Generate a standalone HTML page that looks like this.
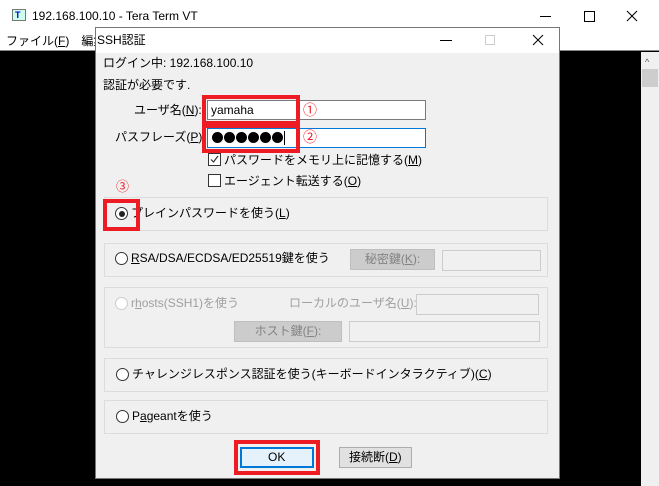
<!DOCTYPE html><html><head><meta charset="utf-8"><style>
*{margin:0;padding:0;box-sizing:border-box}
body{width:659px;height:486px;position:relative;overflow:hidden;background:#000;font-family:"Liberation Sans","Noto Sans CJK JP",sans-serif;font-size:12px;color:#000}
.a{position:absolute;white-space:nowrap;line-height:14px}
.box{position:absolute}
.grp{position:absolute;left:104px;width:444px;border:1px solid #dcdcdc}
.radio{position:absolute;width:13px;height:13px;border:1px solid #333;border-radius:50%;background:#fff}
.btn{position:absolute;background:#ccc;border:1px solid #bfbfbf;text-align:center;line-height:18px;color:#838383}
.tb{position:absolute;background:#f0f0f0;border:1px solid #ccc}
.red{position:absolute;border:4px solid #ed1c24}
.rn{position:absolute;color:#ed1c24;font-size:14px;line-height:14px}
.dis{color:#a0a0a0}
.dot{position:absolute;top:132px;width:11px;height:11px;border-radius:50%;background:#000}
u{text-decoration:underline}
</style></head><body>
<div class="box" style="left:0;top:0;width:659px;height:51px;background:#fff;border-bottom:1px solid #888"></div>
<div class="box" style="left:12px;top:9px;width:14px;height:12px;background:#cfe;border:1px solid #777"></div>
<div class="a" style="left:15px;top:8px;font-size:9px;color:#00c;font-weight:bold">T</div>
<div class="a" style="left:32px;top:9px">192.168.100.10 - Tera Term VT</div>
<div class="box" style="left:540px;top:16px;width:11px;height:1px;background:#000"></div>
<div class="box" style="left:584px;top:11px;width:11px;height:11px;border:1px solid #000"></div>
<svg class="box" style="left:626px;top:10px" width="12" height="12"><path d="M1 1L11 11M11 1L1 11" stroke="#000" stroke-width="1"/></svg>
<div class="a" style="left:6px;top:34px">ファイル(<u>F</u>)　編集</div>
<div class="box" style="left:641px;top:52px;width:18px;height:434px;background:#f0f0f0"></div>
<div class="box" style="left:642px;top:69px;width:16px;height:18px;background:#cdcdcd"></div>
<div class="a" style="left:645px;top:55px;font-size:9px;color:#555">^</div>
<div class="box" style="left:95px;top:27px;width:465px;height:452px;background:#f0f0f0;border:1px solid #777"></div>
<div class="box" style="left:96px;top:28px;width:463px;height:25px;background:#fff"></div>
<div class="a" style="left:97px;top:33px">SSH認証</div>
<div class="box" style="left:440px;top:40px;width:12px;height:1px;background:#000"></div>
<div class="box" style="left:485px;top:35px;width:10px;height:10px;border:1px solid #ccc"></div>
<svg class="box" style="left:532px;top:34px" width="12" height="12"><path d="M1 1L11 11M11 1L1 11" stroke="#000" stroke-width="1"/></svg>
<div class="a" style="left:103px;top:56px">ログイン中: 192.168.100.10</div>
<div class="a" style="left:103px;top:78px">認証が必要です.</div>
<div class="a" style="left:134px;top:103px">ユーザ名(<u>N</u>):</div>
<div class="box" style="left:207px;top:100px;width:219px;height:20px;background:#fff;border:1px solid #7a7a7a"></div>
<div class="a" style="left:211px;top:103px">yamaha</div>
<div class="a" style="left:115px;top:130px">パスフレーズ(<u>P</u>):</div>
<div class="box" style="left:207px;top:128px;width:219px;height:20px;background:#fff;border:1px solid #0078d7"></div>
<div class="dot" style="left:212px"></div><div class="dot" style="left:224px"></div><div class="dot" style="left:236px"></div><div class="dot" style="left:248px"></div><div class="dot" style="left:260px"></div><div class="dot" style="left:272px"></div>
<div class="box" style="left:284px;top:131px;width:1px;height:14px;background:#000"></div>
<div class="red" style="left:202px;top:95px;width:98px;height:58px"></div>
<div class="box" style="left:202px;top:121px;width:98px;height:7px;background:#ed1c24"></div>
<div class="rn" style="left:303px;top:103px">①</div>
<div class="rn" style="left:303px;top:130px">②</div>
<div class="box" style="left:208px;top:153px;width:13px;height:13px;border:1px solid #333;background:#fff"></div>
<svg class="box" style="left:209px;top:154px" width="11" height="11"><path d="M2 5.5L4.5 8L9 2" stroke="#333" stroke-width="1.2" fill="none"/></svg>
<div class="a" style="left:224px;top:153px">パスワードをメモリ上に記憶する(<u>M</u>)</div>
<div class="box" style="left:208px;top:174px;width:13px;height:13px;border:1px solid #333;background:#fff"></div>
<div class="a" style="left:224px;top:174px">エージェント転送する(<u>O</u>)</div>
<div class="rn" style="left:116px;top:180px;font-size:13px">③</div>
<div class="grp" style="top:197px;height:34px"></div>
<div class="radio" style="left:115px;top:207px"></div>
<div class="box" style="left:119px;top:211px;width:6px;height:6px;border-radius:50%;background:#222"></div>
<div class="a" style="left:131px;top:206px">プレインパスワードを使う(<u>L</u>)</div>
<div class="red" style="left:103px;top:199px;width:37px;height:32px"></div>
<div class="grp" style="top:243px;height:34px"></div>
<div class="radio" style="left:115px;top:252px"></div>
<div class="a" style="left:131px;top:251px"><u>R</u>SA/DSA/ECDSA/ED25519鍵を使う</div>
<div class="btn" style="left:350px;top:249px;width:85px;height:21px">秘密鍵(<u>K</u>):</div>
<div class="tb" style="left:442px;top:250px;width:99px;height:21px"></div>
<div class="grp" style="top:287px;height:61px"></div>
<div class="radio" style="left:115px;top:297px;border-color:#ccc"></div>
<div class="a dis" style="left:131px;top:296px">r<u>h</u>osts(SSH1)を使う</div>
<div class="a dis" style="left:289px;top:296px">ローカルのユーザ名(<u>U</u>):</div>
<div class="tb" style="left:416px;top:294px;width:123px;height:21px"></div>
<div class="btn" style="left:234px;top:321px;width:108px;height:21px">ホスト鍵(<u>F</u>):</div>
<div class="tb" style="left:349px;top:321px;width:191px;height:21px"></div>
<div class="grp" style="top:358px;height:34px"></div>
<div class="radio" style="left:116px;top:368px"></div>
<div class="a" style="left:132px;top:367px">チャレンジレスポンス認証を使う(キーボードインタラクティブ)(<u>C</u>)</div>
<div class="grp" style="top:400px;height:34px"></div>
<div class="radio" style="left:116px;top:410px"></div>
<div class="a" style="left:132px;top:409px">P<u>a</u>geantを使う</div>
<div class="box" style="left:240px;top:447px;width:74px;height:21px;background:#e5f1fb;border:2px solid #0078d7"></div>
<div class="a" style="left:268px;top:450px">OK</div>
<div class="red" style="left:234px;top:440px;width:86px;height:35px"></div>
<div class="box" style="left:339px;top:447px;width:73px;height:21px;background:#e1e1e1;border:1px solid #adadad"></div>
<div class="a" style="left:349px;top:450px">接続断(<u>D</u>)</div>
</body></html>
